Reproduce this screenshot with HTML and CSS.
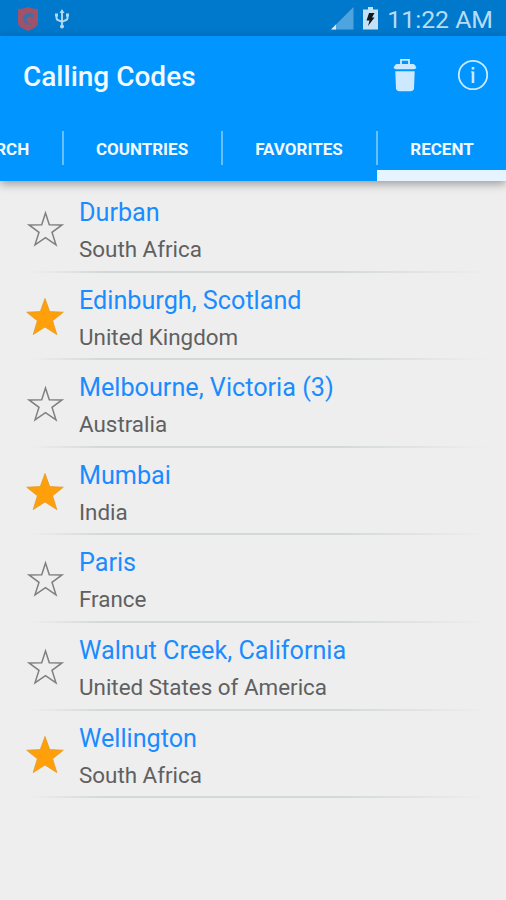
FILE: index.html
```
<!DOCTYPE html>
<html lang="en">
<head>
  <meta charset="UTF-8" />
  <meta name="viewport" content="width=device-width, initial-scale=1.0"/>
  <title>Calling Codes</title>
  <link rel="stylesheet" href="styles.css">
</head>
<body>

  <!-- shared star shapes -->
  <svg width="0" height="0" class="defs">
    <symbol id="star" viewBox="0 0 40 40">
      <path d="M20.5 4 L24.3 15.8 L37 15.9 L27 23.3 L31 35.8 L20.5 28.6 L10 35.8 L14 23.3 L4 15.9 L16.7 15.8 Z"/>
    </symbol>
    <symbol id="star-on" viewBox="0 0 40 40">
      <path d="M20 1.5 L24.7 14.6 L38.3 15.2 L27.6 23.8 L31.8 37.6 L20 30 L8.2 37.6 L12.4 23.8 L1.7 15.2 L15.3 14.6 Z"/>
    </symbol>
  </svg>

  <!-- STATUS BAR -->
  <div class="status-bar">
    <svg class="shield" width="22" height="24" viewBox="0 0 22 24">
      <path d="M1 2 Q6 2 11 0 Q16 2 21 2 V16 Q21 20 11 24 Q1 20 1 16 Z" fill="#a0526a"/>
      <path d="M16 7 A6 6 0 1 0 15 17 Q9.5 16.5 9.5 13 Q9.5 9.5 13 9.5 Q15 9.5 16 11.5 Q17 9 16 7 Z" fill="#3c70a8"/>
    </svg>
    <svg class="usb" width="16" height="20" viewBox="0 0 16 20">
      <path d="M8 2 V18 M2.5 6 V9 Q2.5 11 5 11.5 L8 13 L11 11.5 Q13.5 11 13.5 9 V6" fill="none" stroke="#b5daf5" stroke-width="1.9"/>
      <path d="M8 0 L10.5 4 H5.5 Z M1 4.5 H4 V7.5 H1 Z M12 4.5 H15 V7.5 H12 Z" fill="#b5daf5"/>
      <circle cx="8" cy="17.5" r="2" fill="#b5daf5"/>
    </svg>
    <svg class="signal" width="23" height="23" viewBox="0 0 23 23">
      <path d="M22.5 0 V22.5 H0 Z" fill="#4ea4df"/>
      <path d="M5 17.5 V22.5 H0 Z" fill="#d5ebfa"/>
    </svg>
    <svg class="battery" width="15" height="23" viewBox="0 0 15 23">
      <path d="M5 0 H10 V2.5 H15 V22.5 H0 V2.5 H5 Z" fill="#c5e1f5"/>
      <path d="M6 6 H11.5 L9 10.5 H11.5 L5 19 L6.5 13.5 H3.5 Z" fill="#101820"/>
    </svg>
    <span class="clock">11:22 AM</span>
  </div>

  <!-- HEADER -->
  <header class="header">
    <div class="title-bar">
      <h1>Calling Codes</h1>
      <svg class="trash" width="24" height="34" viewBox="0 0 24 34">
        <path d="M8 6 V1.8 H16 V6" fill="none" stroke="#cce9ff" stroke-width="1.8"/>
        <path d="M3.5 6 H20.5 Q22.5 6.5 23.2 9.5 Q23 11.3 21 11.3 H3 Q1 11.3 0.8 9.5 Q1.5 6.5 3.5 6 Z" fill="#cce9ff"/>
        <path d="M2.3 13.3 H21.7 L21 30.5 Q20.5 33.3 17.5 33.3 H6.5 Q3.5 33.3 3 30.5 Z" fill="#cce9ff"/>
      </svg>
      <svg class="info" width="32" height="32" viewBox="0 0 32 32">
        <circle cx="16" cy="16" r="14.2" fill="none" stroke="#cce9ff" stroke-width="1.8"/>
        <path d="M16 8 V10.5 M16 12.5 V24" fill="none" stroke="#cce9ff" stroke-width="2.6"/>
        <path d="M14 13 H16" fill="none" stroke="#cce9ff" stroke-width="1.2"/>
      </svg>
    </div>
    <nav class="tabs">
      <a class="tab tab-search"><span>SEARCH</span></a>
      <a class="tab tab-countries"><span>COUNTRIES</span></a>
      <a class="tab tab-favorites"><span>FAVORITES</span></a>
      <a class="tab tab-recent active"><span>RECENT</span></a>
    </nav>
  </header>

  <!-- RECENT LIST -->
  <ul class="list">
    <li class="item">
      <svg class="star"><use href="#star"/></svg>
      <div class="info-text"><h2>Durban</h2><p>South Africa</p></div>
    </li>
    <li class="item">
      <svg class="star on"><use href="#star-on"/></svg>
      <div class="info-text"><h2>Edinburgh, Scotland</h2><p>United Kingdom</p></div>
    </li>
    <li class="item">
      <svg class="star"><use href="#star"/></svg>
      <div class="info-text"><h2>Melbourne, Victoria (3)</h2><p>Australia</p></div>
    </li>
    <li class="item">
      <svg class="star on"><use href="#star-on"/></svg>
      <div class="info-text"><h2>Mumbai</h2><p>India</p></div>
    </li>
    <li class="item">
      <svg class="star"><use href="#star"/></svg>
      <div class="info-text"><h2>Paris</h2><p>France</p></div>
    </li>
    <li class="item">
      <svg class="star"><use href="#star"/></svg>
      <div class="info-text"><h2>Walnut Creek, California</h2><p>United States of America</p></div>
    </li>
    <li class="item">
      <svg class="star on"><use href="#star-on"/></svg>
      <div class="info-text"><h2>Wellington</h2><p>South Africa</p></div>
    </li>
  </ul>

</body>
</html>
```
FILE: styles.css
```
* {
  margin: 0; padding: 0;
  box-sizing: border-box;
}

body {
  background: #eeeeee;
  font-family: Roboto, 'Liberation Sans', sans-serif;
  height: 900px;
  overflow: hidden;
}

.defs {
  display: block;
}

.status-bar {
  height: 36px;
  background: #0078cc;
  display: flex;
  align-items: center;
  padding: 1px 13px 0 17px;
}

.usb {
  margin-left: 15px;
}

.signal {
  margin-left: auto;
}

.battery {
  margin: 0 9px 0 9px;
}

.clock {
  font-size: 24.8px;
  line-height: 34px;
  padding-top: 2px;
  color: #b8dcf5;
}

.header {
  height: 145px;
  background: #0095ff;
  box-shadow: 0 3px 9px rgba(0,0,0,0.35);
}

.title-bar {
  height: 80px;
  display: flex;
  align-items: center;
  padding: 0 17px 0 23px;
}

h1 {
  font-size: 28px;
  font-weight: 500;
  color: #f2faff;
}

.trash {
  margin-left: auto;
  margin-right: 40px;
  margin-top: -2px;
}

.info {
  margin-top: -2px;
}

.tabs {
  height: 65px;
  display: flex;
  justify-content: flex-end;
}

.tab {
  flex-shrink: 0;
  height: 65px;
  display: flex;
  align-items: flex-start;
  padding-top: 15px;
  font-size: 17px;
  font-weight: 700;
  color: #f2faff;
}

.tab span {
  flex: 1;
  height: 34px;
  line-height: 36px;
  text-align: center;
  margin-right: -1px;
  border-right: 2px solid #66bfff;
}

.tab-search { width: 132px; }
.tab-countries { width: 159px; }
.tab-favorites { width: 155px; }
.tab-recent { width: 129px; }

.tab.active {
  border-bottom: 11px solid #e6f4ff;
}

.tab.active span {
  border-right: none;
}

.list {
  list-style: none;
  padding-top: 4px;
}

.item {
  height: 87.6px;
  display: flex;
  padding-left: 25px;
  background: linear-gradient(90deg, transparent 30px, #d3d9db 100px, #d3d9db 340px, transparent 490px) bottom / 100% 2px no-repeat;
}

.star {
  width: 40px;
  height: 40px;
  margin-top: 24px;
  fill: none;
  stroke: #808080;
  stroke-width: 1.5;
}

.star.on {
  fill: #ff9f0a;
  stroke: #e39a28;
  stroke-width: 0.8;
}

.info-text {
  margin-left: 14px;
  padding-top: 10px;
}

.info-text h2 {
  font-size: 25.2px;
  font-weight: 400;
  line-height: 36px;
  color: #1a8cff;
}

.info-text p {
  font-size: 22.4px;
  line-height: 36px;
  color: #606060;
}
```
